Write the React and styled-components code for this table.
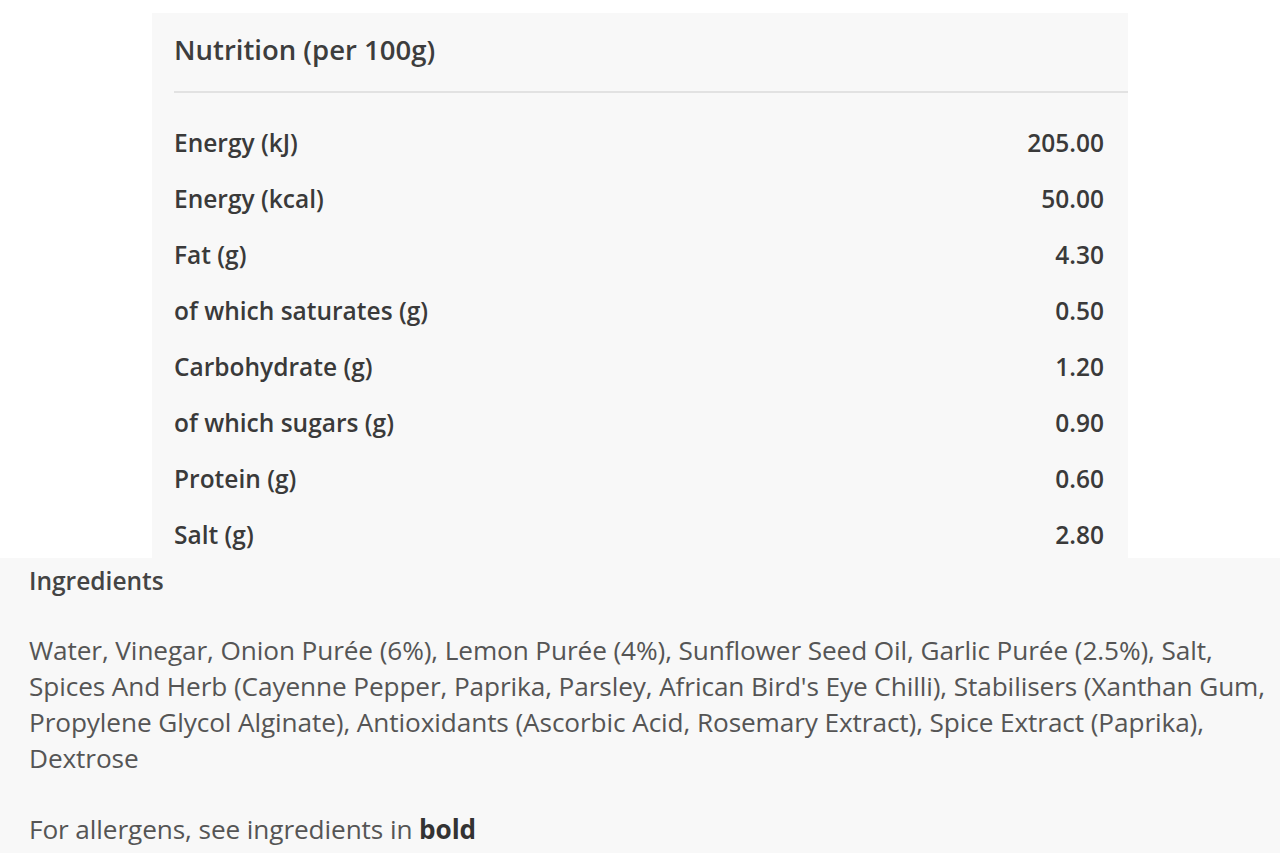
import React from 'react';
import styled, { createGlobalStyle } from 'styled-components';

const GlobalStyle = createGlobalStyle`
    html, body {
        margin: 0;
        padding: 0;
        background: #ffffff;
        font-family: "Open Sans", Lato, sans-serif;
    }
`

const Page = styled.div`
    width: 1280px;
    height: 853px;
    overflow: hidden;
    display: flex;
    flex-direction: column;
    padding-top: 13px;
    box-sizing: border-box;
`

const Card = styled.section`
    margin-left: 152px;
    width: 976px;
    height: 545px;
    flex-shrink: 0;
    background: #f8f8f8;
    padding-left: 22px;
    box-sizing: border-box;
`

const Title = styled.h3`
    margin: 0;
    height: 80px;
    padding-bottom: 6px;
    display: flex;
    align-items: center;
    font-size: 27.5px;
    font-weight: 600;
    color: #3d3d3d;
    border-bottom: 2px solid #e2e2e2;
    box-sizing: border-box;
`

const Table = styled.div`
    display: flex;
    flex-direction: column;
    padding: 21px 24px 0 0;
`

const Row = styled.div`
    height: 56px;
    flex-shrink: 0;
    display: flex;
    align-items: center;
    justify-content: space-between;
    font-size: 24.5px;
    font-weight: 600;
    color: #3a3a3a;
`

const Ingredients = styled.section`
    flex: 1;
    background: #f8f8f8;
    padding: 8px 29px 0;
`

const SubTitle = styled.h4`
    margin: 0;
    font-size: 24.5px;
    line-height: 30px;
    font-weight: 600;
    color: #444;
`

const Text = styled.p`
    margin: ${p => p.$top}px 0 0;
    font-size: 26.2px;
    letter-spacing: -0.1px;
    line-height: 36px;
    color: #555;
    white-space: nowrap;

    strong {
        color: #333;
        font-weight: 700;
    }
`

const rows = [
    ['Energy (kJ)', '205.00'],
    ['Energy (kcal)', '50.00'],
    ['Fat (g)', '4.30'],
    ['of which saturates (g)', '0.50'],
    ['Carbohydrate (g)', '1.20'],
    ['of which sugars (g)', '0.90'],
    ['Protein (g)', '0.60'],
    ['Salt (g)', '2.80'],
]

const App = () => {
    return (
        <Page>
            <GlobalStyle />
            <Card>
                <Title>Nutrition (per 100g)</Title>
                <Table>
                    {rows.map(([label, value]) => (
                        <Row key={label}>
                            <span>{label}</span>
                            <span>{value}</span>
                        </Row>
                    ))}
                </Table>
            </Card>
            <Ingredients>
                <SubTitle>Ingredients</SubTitle>
                <Text $top={36}>
                    Water, Vinegar, Onion Purée (6%), Lemon Purée (4%), Sunflower Seed Oil, Garlic Purée (2.5%), Salt,<br />
                    Spices And Herb (Cayenne Pepper, Paprika, Parsley, African Bird's Eye Chilli), Stabilisers (Xanthan Gum,<br />
                    Propylene Glycol Alginate), Antioxidants (Ascorbic Acid, Rosemary Extract), Spice Extract (Paprika),<br />
                    Dextrose
                </Text>
                <Text $top={35}>For allergens, see ingredients in <strong>bold</strong></Text>
            </Ingredients>
        </Page>
    )
}

export default App;
